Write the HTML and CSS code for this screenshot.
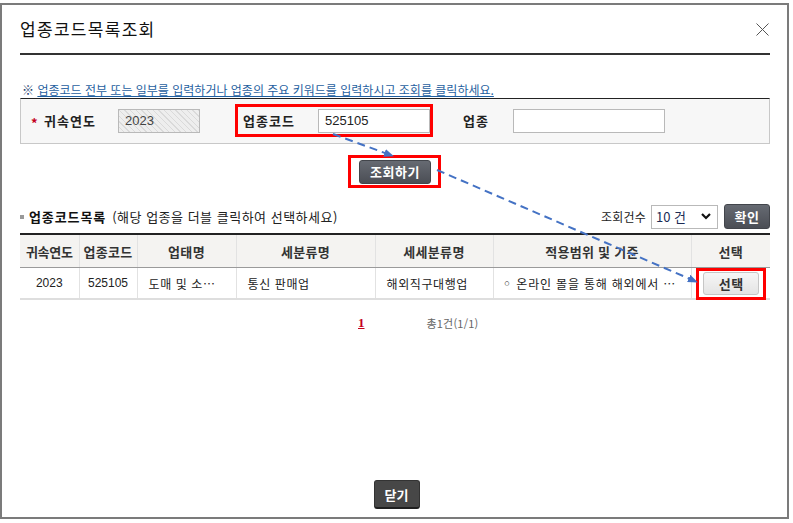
FILE: index.html
```html
<!DOCTYPE html>
<html lang="ko">
<head>
<meta charset="utf-8">
<title>업종코드목록조회</title>
<link rel="stylesheet" href="styles.css">
</head>
<body>
<div class="modal">
  <div class="head">
    <h1 class="title">업종코드목록조회</h1>
    <span class="close" aria-label="닫기">
      <svg width="13" height="13" viewBox="0 0 13 13"><path d="M0.5 0.5 L12.5 12.5 M12.5 0.5 L0.5 12.5" stroke="#555" stroke-width="1" fill="none"/></svg>
    </span>
  </div>

  <p class="info"><span class="mark">※</span> <a class="info-link">업종코드 전부 또는 일부를 입력하거나 업종의 주요 키워드를 입력하시고 조회를 클릭하세요.</a></p>

  <div class="form">
    <span class="star">*</span>
    <span class="lbl lbl-a">귀속연도</span>
    <span class="inp inp-year">2023</span>
    <span class="lbl lbl-b">업종코드</span>
    <span class="inp inp-code">525105</span>
    <span class="lbl lbl-c">업종</span>
    <span class="inp inp-name"></span>
  </div>

  <div class="search-row">
    <button class="btn-dark btn-search">조회하기</button>
  </div>

  <div class="list-head">
    <div class="list-title"><span class="bullet"></span><b>업종코드목록</b> <span class="hint">(해당 업종을 더블 클릭하여 선택하세요)</span></div>
    <div class="list-tools">
      <span class="cnt-label">조회건수</span>
      <div class="select"><span>10 건</span>
        <svg width="10" height="7" viewBox="0 0 10 7"><path d="M1 1 L5 5 L9 1" stroke="#111" stroke-width="2.2" fill="none"/></svg>
      </div>
      <button class="btn-dark btn-ok">확인</button>
    </div>
  </div>

  <table class="grid">
    <colgroup>
      <col class="c1"><col class="c2"><col class="c3"><col class="c4"><col class="c5"><col class="c6"><col class="c7">
    </colgroup>
    <thead>
      <tr><th>귀속연도</th><th>업종코드</th><th>업태명</th><th>세분류명</th><th>세세분류명</th><th>적용범위 및 기준</th><th>선택</th></tr>
    </thead>
    <tbody>
      <tr>
        <td class="ctr num">2023</td>
        <td class="ctr num">525105</td>
        <td class="lft">도매 및 소…</td>
        <td class="lft">통신 판매업</td>
        <td class="lft">해외직구대행업</td>
        <td class="lft scope"><span class="dot">◦</span>온라인 몰을 통해 해외에서 …</td>
        <td class="ctr"><button class="btn-light">선택</button></td>
      </tr>
    </tbody>
  </table>

  <div class="paging">
    <a class="page-cur">1</a>
    <span class="total">총1건(1/1)</span>
  </div>

  <div class="foot">
    <button class="btn-close">닫기</button>
  </div>
</div>

<svg class="overlay" width="793" height="523" viewBox="0 0 793 523">
  <defs>
    <marker id="ah" markerWidth="10" markerHeight="8" refX="9" refY="4" orient="auto" markerUnits="userSpaceOnUse">
      <path d="M0 0 L10 4 L0 8 Z" fill="#4472c4"/>
    </marker>
  </defs>
  <rect x="236.5" y="105.5" width="195" height="30" fill="none" stroke="#ff0000" stroke-width="3"/>
  <rect x="349.5" y="156.5" width="90" height="30" fill="none" stroke="#ff0000" stroke-width="3"/>
  <rect x="697.5" y="269.5" width="67" height="29" fill="none" stroke="#ff0000" stroke-width="3"/>
  <line x1="333" y1="134" x2="393" y2="156" stroke="#4472c4" stroke-width="2" stroke-dasharray="8 5" marker-end="url(#ah)"/>
  <line x1="437" y1="170" x2="697" y2="282" stroke="#4472c4" stroke-width="2" stroke-dasharray="8 5" marker-end="url(#ah)"/>
</svg>
</body>
</html>
```

FILE: styles.css
```css
html, body {
  margin: 0;
  padding: 0;
  background: #fff;
}
body {
  position: relative;
  width: 793px;
  height: 523px;
  overflow: hidden;
  font-family: "Noto Sans CJK KR", "Noto Sans", sans-serif;
  color: #222;
}
.modal {
  margin-top: 3px;
  width: 789px;
  height: 516px;
  box-sizing: border-box;
  border: 2px solid #7b7b7b;
  padding: 0 17px 0 18px;
  display: flex;
  flex-direction: column;
}
.head {
  height: 48px;
  display: flex;
  align-items: center;
  border-bottom: 2px solid #333;
  flex: none;
}
.title {
  margin: 0;
  font-size: 17px;
  font-weight: normal;
  line-height: 20px;
  color: #111;
  letter-spacing: 1.3px;
}
.close {
  margin-left: auto;
  margin-right: 1px;
  display: flex;
  width: 13px;
  height: 13px;
}
.info {
  margin: 27px 0 0 2px;
  height: 16px;
  line-height: 16px;
  font-size: 12px;
  letter-spacing: 0;
  flex: none;
}
.mark {
  color: #1c3d6e;
  font-weight: bold;
  font-size: 12px;
}
.info-link {
  color: #1f5fa0;
  text-decoration: underline;
  text-underline-offset: 1px;
}
.form {
  flex: none;
  height: 44px;
  display: flex;
  align-items: center;
  background: #f7f7f7;
  border: 1px solid #c8c8c8;
  border-top: 1px solid #222;
  padding-left: 10px;
}
.star {
  width: 13px;
  color: #c4001c;
  font-size: 13px;
  font-weight: bold;
  line-height: 13px;
  padding-top: 3px;
}
.lbl {
  font-size: 13px;
  font-weight: bold;
  color: #222;
  line-height: 16px;
  letter-spacing: 1px;
}
.lbl-a { width: 74px; }
.lbl-b { margin-left: 43px; width: 75px; }
.lbl-c { margin-left: 33px; width: 50px; }
.inp {
  box-sizing: border-box;
  height: 24px;
  border: 1px solid #b9b9b9;
  background: #fff;
  font-family: "Liberation Sans", Arial, sans-serif;
  font-size: 13px;
  line-height: 22px;
  padding-left: 6px;
  color: #222;
}
.inp-year {
  width: 82px;
  color: #444;
  background: #eeeeee repeating-linear-gradient(45deg, #eeeeee 0, #eeeeee 3px, #dadada 3px, #dadada 4px);
}
.inp-code { width: 112px; }
.inp-name { width: 152px; }

.search-row {
  flex: none;
  margin-top: 16px;
  display: flex;
  justify-content: center;
}
.btn-dark {
  box-sizing: border-box;
  border: 1px solid #42454b;
  border-radius: 3px;
  background: linear-gradient(#666a72, #4b4e55);
  color: #fff;
  font-family: "Noto Sans CJK KR", sans-serif;
  font-size: 13px;
  font-weight: bold;
  padding: 0;
  line-height: 20px;
  letter-spacing: 0.5px;
}
.btn-search { width: 72px; height: 24px; }
.btn-ok { width: 46px; height: 25px; margin-left: 6px; }

.list-head {
  flex: none;
  margin-top: 20px;
  height: 25px;
  display: flex;
  align-items: center;
  justify-content: space-between;
}
.list-title {
  display: flex;
  align-items: center;
  font-size: 13px;
  line-height: 16px;
  color: #111;
}
.bullet {
  width: 4px;
  height: 4px;
  background: #999;
  margin-right: 5px;
  margin-top: 1px;
}
.list-title b { font-weight: bold; letter-spacing: 0.9px; }
.hint { margin-left: 6px; letter-spacing: 0.5px; color: #222; }
.list-tools {
  display: flex;
  align-items: center;
}
.cnt-label {
  font-size: 12px;
  line-height: 16px;
  color: #222;
  margin-right: 5px;
  letter-spacing: 0.2px;
}
.select {
  box-sizing: border-box;
  width: 67px;
  height: 24px;
  border: 1px solid #b9b9b9;
  background: #fff;
  display: flex;
  align-items: center;
  justify-content: space-between;
  padding: 0 6px 0 4px;
  font-size: 13px;
  color: #1b2b55;
  line-height: 16px;
}

.grid {
  flex: none;
  margin-top: 4px;
  width: 750px;
  border-collapse: collapse;
  table-layout: fixed;
  border-top: 2px solid #222;
}
.c1 { width: 59px; }
.c2 { width: 58px; }
.c3 { width: 99px; }
.c4 { width: 139px; }
.c5 { width: 118px; }
.c6 { width: 198px; }
.c7 { width: 79px; }
.grid th {
  height: 32px;
  padding: 0;
  background: #f4f3f1;
  font-size: 13px;
  font-weight: bold;
  color: #333;
  border-bottom: 1px solid #9a9a9a;
  border-left: 1px solid #e2e2e2;
  white-space: nowrap;
  letter-spacing: 0.3px;
}
.grid th:first-child { letter-spacing: -0.3px; }
.grid th:first-child, .grid td:first-child { border-left: none; }
.grid td {
  height: 30px;
  padding: 0;
  font-size: 12px;
  color: #222;
  border-bottom: 2px solid #dedede;
  border-left: 1px solid #e2e2e2;
  white-space: nowrap;
  overflow: hidden;
  letter-spacing: 0.6px;
}
.ctr { text-align: center; }
.lft { padding-left: 11px !important; }
.scope { padding-left: 9px !important; letter-spacing: 0.8px !important; }
.dot {
  font-family: "DejaVu Sans", sans-serif;
  font-size: 15px;
  line-height: 12px;
  margin-right: 5px;
  letter-spacing: 0;
}
.num {
  font-family: "Liberation Sans", Arial, sans-serif;
  font-size: 12px;
  color: #333;
  letter-spacing: 0 !important;
}
.btn-light {
  box-sizing: border-box;
  width: 56px;
  height: 23px;
  border: 1px solid #c6c6c6;
  border-radius: 3px;
  background: linear-gradient(#f6f6f6, #e4e4e4);
  font-family: "Noto Sans CJK KR", sans-serif;
  font-size: 13px;
  font-weight: bold;
  color: #333;
  padding: 0;
  margin-left: 1px;
  line-height: 19px;
  letter-spacing: 0.5px;
}
.paging {
  flex: none;
  margin-top: 13px;
  height: 20px;
  display: flex;
  align-items: center;
  padding-left: 338px;
}
.page-cur {
  font-family: "Liberation Serif", "Times New Roman", serif;
  font-weight: bold;
  font-size: 13px;
  color: #c4001c;
  text-decoration: underline;
}
.total {
  margin-left: 62px;
  font-size: 11px;
  color: #666;
  letter-spacing: 0.2px;
}
.foot {
  margin-top: auto;
  margin-bottom: 8px;
  display: flex;
  justify-content: center;
  padding-left: 3px;
}
.btn-close {
  box-sizing: border-box;
  width: 46px;
  height: 29px;
  border: 1px solid #333;
  border-bottom: 2px solid #1f1f1f;
  border-radius: 3px;
  background: #474747;
  color: #fff;
  font-family: "Noto Sans CJK KR", sans-serif;
  font-size: 13px;
  font-weight: bold;
  padding: 0;
}
.overlay {
  position: absolute;
  left: 0;
  top: 0;
  pointer-events: none;
}
```
